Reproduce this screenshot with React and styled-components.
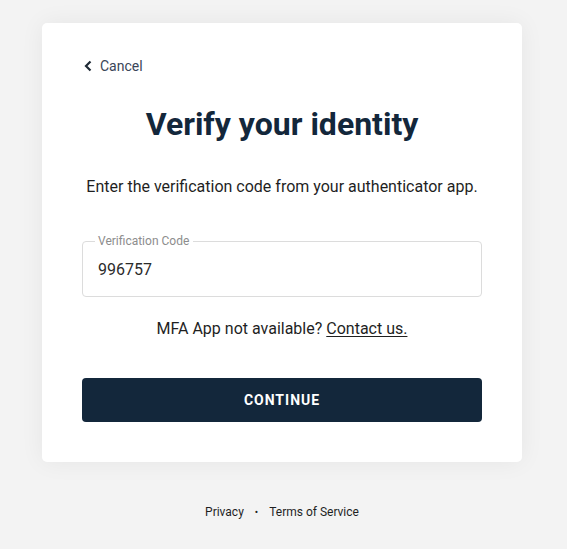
import React from 'react';
import styled, { createGlobalStyle } from 'styled-components';

const GlobalStyle = createGlobalStyle`
  html, body {
    margin: 0;
    padding: 0;
    background: #f3f3f3;
    font-family: Roboto, "Liberation Sans", Arial, sans-serif;
  }
`;

const Page = styled.div`
  min-height: 549px;
  display: flex;
  flex-direction: column;
  align-items: center;
  padding: 23px 3px 0 0;
  box-sizing: border-box;
`;

const Card = styled.div`
  width: 480px;
  box-sizing: border-box;
  background: #fff;
  border-radius: 5px;
  box-shadow: 0 0 24px rgba(0, 0, 0, 0.06);
  padding: 35px 40px 40px;
  display: flex;
  flex-direction: column;
`;

const BackLink = styled.a`
  display: inline-flex;
  align-items: center;
  gap: 6px;
  align-self: flex-start;
  color: #3a4658;
  font-size: 14px;
  text-decoration: none;
  cursor: pointer;
`;

const Title = styled.h1`
  margin: 30px 0 0;
  text-align: center;
  font-size: 32px;
  font-weight: 700;
  color: #13273b;
  line-height: 40px;
`;

const Lead = styled.p`
  margin: 32px 0 0;
  text-align: center;
  font-size: 16px;
  color: #1f1f1f;
  line-height: 22px;
`;

const Field = styled.div`
  position: relative;
  margin-top: 43px;
  padding: 0 15px;
  height: 56px;
  box-sizing: border-box;
  border: 1px solid #dcdcdc;
  border-radius: 4px;
  display: flex;
  align-items: center;
`;

const Label = styled.label`
  position: absolute;
  top: -7px;
  left: 12px;
  padding: 0 4px 0 3px;
  background: #fff;
  font-size: 12px;
  line-height: 12px;
  color: #8d8d8d;
`;

const Input = styled.input`
  border: none;
  outline: none;
  width: 100%;
  font-family: inherit;
  font-size: 16px;
  color: #2b2b2b;
  padding: 0;
  background: transparent;
`;

const Help = styled.p`
  margin: 22px 0 0;
  text-align: center;
  font-size: 16px;
  color: #1f1f1f;
`;

const HelpLink = styled.a`
  color: #1f1f1f;
  text-decoration: underline;
  text-underline-offset: 2px;
  cursor: pointer;
`;

const Button = styled.button`
  margin-top: 40px;
  height: 44px;
  border: none;
  border-radius: 4px;
  background: #13273b;
  color: #fff;
  font-family: inherit;
  font-size: 14px;
  font-weight: 700;
  letter-spacing: 1px;
  cursor: pointer;
`;

const Footer = styled.div`
  margin-top: 43px;
  display: flex;
  align-items: center;
  gap: 11px;
  font-size: 12px;
  color: #1f1f1f;
`;

const FooterLink = styled.a`
  color: inherit;
  text-decoration: none;
  cursor: pointer;
`;

const Dot = styled.span`
  font-size: 10px;
`;

export default function App() {
  return (
    <>
      <GlobalStyle />
      <Page>
        <Card>
          <BackLink>
            <svg width="12" height="12" viewBox="0 0 12 12" fill="none">
              <path d="M8.5 1.5 L4 6 L8.5 10.5" stroke="#1f2a36" strokeWidth="2.2" />
            </svg>
            Cancel
          </BackLink>
          <Title>Verify your identity</Title>
          <Lead>Enter the verification code from your authenticator app.</Lead>
          <Field>
            <Label htmlFor="code">Verification Code</Label>
            <Input id="code" defaultValue="996757" />
          </Field>
          <Help>
            MFA App not available? <HelpLink>Contact us.</HelpLink>
          </Help>
          <Button>CONTINUE</Button>
        </Card>
        <Footer>
          <FooterLink>Privacy</FooterLink>
          <Dot>•</Dot>
          <FooterLink>Terms of Service</FooterLink>
        </Footer>
      </Page>
    </>
  );
}
